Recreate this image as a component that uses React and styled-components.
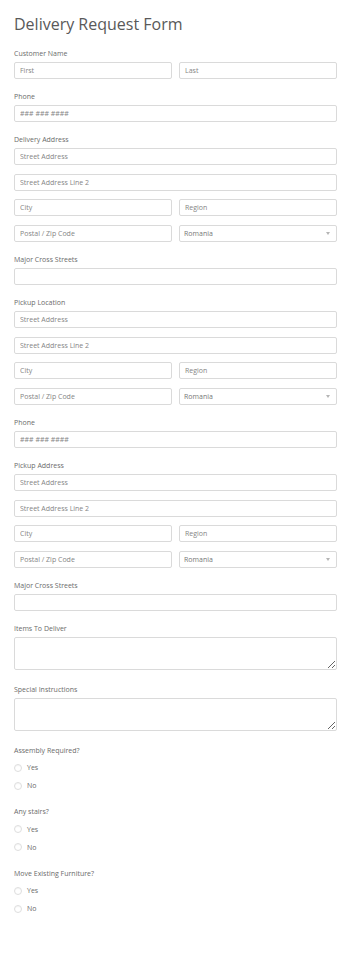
import styled, { createGlobalStyle } from "styled-components";

const GlobalStyle = createGlobalStyle`
  html, body {
    margin: 0;
    padding: 0;
    background: #fff;
  }
  body {
    font-family: "Open Sans", "Liberation Sans", sans-serif;
    color: #555;
  }
  * { box-sizing: border-box; }
`;

const Page = styled.div`
  width: 350px;
  padding: 14px 13px 40px 14px;
`;

const Title = styled.h1`
  margin: 0 0 15px;
  font-size: 16px;
  line-height: 20px;
  font-weight: 400;
  color: #595959;
`;

const Field = styled.div`
  margin-bottom: ${(p) => (p.$tall ? "15px" : "13px")};
`;

const Label = styled.div`
  font-size: 7px;
  line-height: 10px;
  margin-bottom: 3px;
  color: #6b6b6b;
`;

const Stack = styled.div`
  display: flex;
  flex-direction: column;
  gap: 8.67px;
`;

const Row = styled.div`
  display: grid;
  grid-template-columns: 1fr 1fr;
  column-gap: 7px;
`;

const Input = styled.input`
  display: block;
  width: 100%;
  height: 17px;
  margin: 0;
  padding: 0 5px;
  border: 1px solid #dadada;
  border-radius: 2px;
  background: #fff;
  font-family: inherit;
  font-size: 7px;
  color: #555;
  outline: none;
  &::placeholder {
    color: #858585;
  }
`;

const TextArea = styled.textarea`
  display: block;
  width: 100%;
  height: 33px;
  margin: 0;
  padding: 4px 5px;
  border: 1px solid #dadada;
  border-radius: 2px;
  font-family: inherit;
  font-size: 7px;
  outline: none;
`;

const SelectWrap = styled.div`
  position: relative;
`;

const Select = styled.select`
  display: block;
  width: 100%;
  height: 17px;
  margin: 0;
  padding: 0 4px;
  border: 1px solid #dadada;
  border-radius: 2px;
  background: #fff;
  appearance: none;
  font-family: inherit;
  font-size: 7px;
  color: #777;
  outline: none;
`;

const Caret = styled.span`
  position: absolute;
  right: 7px;
  top: 7px;
  width: 0;
  height: 0;
  border-left: 2.5px solid transparent;
  border-right: 2.5px solid transparent;
  border-top: 3px solid #b5b5b5;
  pointer-events: none;
`;

const Options = styled.div`
  display: flex;
  flex-direction: column;
`;

const Option = styled.label`
  display: flex;
  align-items: center;
  height: 18px;
  font-size: 7px;
  color: #6b6b6b;
`;

const Radio = styled.span`
  width: 8px;
  height: 8px;
  margin: 0 5px 0 0;
  border: 1px solid #dedede;
  border-radius: 50%;
  background: #fff;
  box-shadow: inset 0 1px 1px rgba(0, 0, 0, 0.04);
`;

const RadioField = styled.div`
  margin-bottom: 12.5px;
`;

function Country() {
  return (
    <SelectWrap>
      <Select defaultValue="Romania">
        <option>Romania</option>
      </Select>
      <Caret />
    </SelectWrap>
  );
}

function AddressField({ label }) {
  return (
    <Field>
      <Label>{label}</Label>
      <Stack>
        <Input placeholder="Street Address" />
        <Input placeholder="Street Address Line 2" />
        <Row>
          <Input placeholder="City" />
          <Input placeholder="Region" />
        </Row>
        <Row>
          <Input placeholder="Postal / Zip Code" />
          <Country />
        </Row>
      </Stack>
    </Field>
  );
}

function TextField({ label, placeholder }) {
  return (
    <Field>
      <Label>{label}</Label>
      <Input placeholder={placeholder} />
    </Field>
  );
}

function YesNo({ label }) {
  return (
    <RadioField>
      <Label>{label}</Label>
      <Options>
        <Option>
          <Radio />
          Yes
        </Option>
        <Option>
          <Radio />
          No
        </Option>
      </Options>
    </RadioField>
  );
}

export default function App() {
  return (
    <>
      <GlobalStyle />
      <Page>
        <Title>Delivery Request Form</Title>
        <Field>
          <Label>Customer Name</Label>
          <Row>
            <Input placeholder="First" />
            <Input placeholder="Last" />
          </Row>
        </Field>
        <TextField label="Phone" placeholder="### ### ####" />
        <AddressField label="Delivery Address" />
        <TextField label="Major Cross Streets" />
        <AddressField label="Pickup Location" />
        <TextField label="Phone" placeholder="### ### ####" />
        <AddressField label="Pickup Address" />
        <TextField label="Major Cross Streets" />
        <Field $tall>
          <Label>Items To Deliver</Label>
          <TextArea />
        </Field>
        <Field $tall>
          <Label>Special Instructions</Label>
          <TextArea />
        </Field>
        <YesNo label="Assembly Required?" />
        <YesNo label="Any stairs?" />
        <YesNo label="Move Existing Furniture?" />
      </Page>
    </>
  );
}
